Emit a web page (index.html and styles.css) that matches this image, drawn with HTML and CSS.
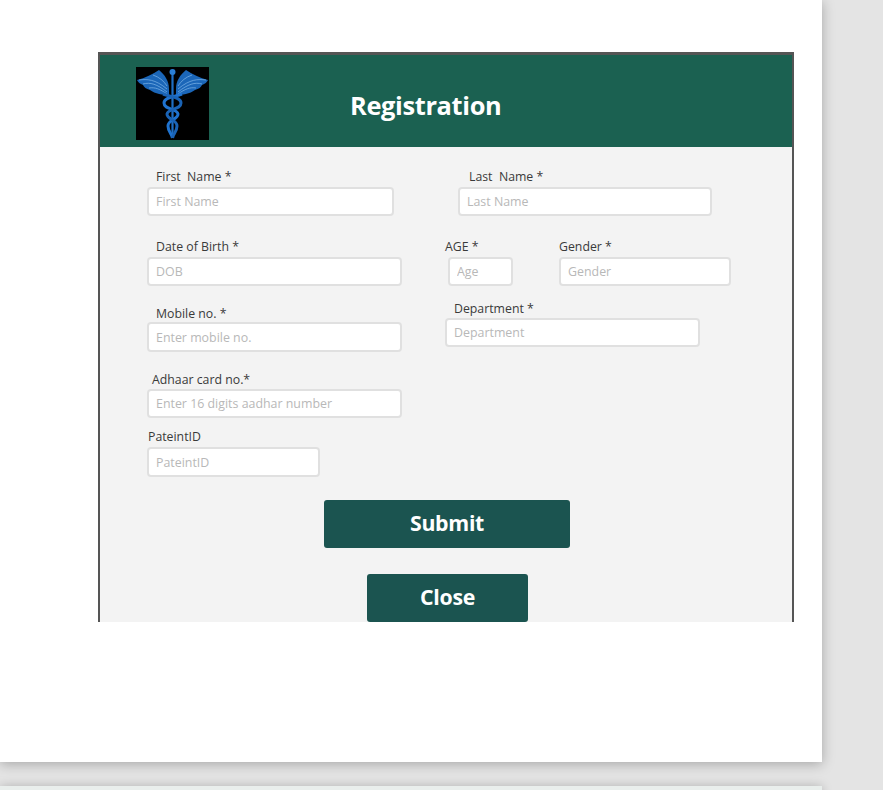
FILE: index.html
```html
<!DOCTYPE html>
<html lang="en">
<head>
<meta charset="utf-8">
<title>Registration</title>
<link rel="stylesheet" href="styles.css">
</head>
<body>
<main class="card">
  <section class="modal">
    <header class="modal-head">
      <svg class="logo" viewBox="0 0 73 73" aria-label="Caduceus logo">
        <rect width="73" height="73" fill="#000"/>
        <g>
          <path d="M33 28C27 28 19 27 14 23C10 22 8 20 7 18C4 17 2 15 1 13C9 11 17 7 23 3C29 8 33 14 33 22Z" fill="#1b66b8"/>
          <path d="M3 13C11 12 19 12 31 22M7 17C14 15 21 17 31 25M13 21C19 20 24 22 31 27M17 8C23 10 28 14 31 19" stroke="#7fb6e8" stroke-width=".7" fill="none"/>
        </g>
        <g>
          <path d="M40 28C46 28 54 27 59 23C63 22 65 20 66 18C69 17 71 15 72 13C64 11 56 7 50 3C44 8 40 14 40 22Z" fill="#1b66b8"/>
          <path d="M70 13C62 12 54 12 42 22M66 17C59 15 52 17 42 25M60 21C54 20 49 22 42 27M56 8C50 10 45 14 42 19" stroke="#7fb6e8" stroke-width=".7" fill="none"/>
        </g>
        <path d="M36.5 5V71" stroke="#1f6fc4" stroke-width="2.2" fill="none"/>
        <circle cx="36.5" cy="5" r="3" fill="#2a7fd6"/>
        <path d="M46 27C38 30 28 30 28 36C28 43 41 41 42 47C42 53 32 52 32 59C32 65 36 67 36.5 71" stroke="#1f73cf" stroke-width="3" fill="none"/>
        <path d="M27 27C35 30 45 30 45 36C45 43 32 41 31 47C31 53 41 52 41 59C41 65 37 67 36.5 71" stroke="#1a63b5" stroke-width="3" fill="none"/>
      </svg>
      <h1 class="title">Registration</h1>
    </header>
    <form class="form">
      <div class="row">
        <div class="field w-first"><label class="lbl in-9">First&nbsp; Name *</label><input class="inp" placeholder="First Name"></div>
        <div class="field w-last gap-64"><label class="lbl in-11">Last&nbsp; Name *</label><input class="inp" placeholder="Last Name"></div>
      </div>
      <div class="row row-2">
        <div class="field w-255"><label class="lbl in-9">Date of Birth *</label><input class="inp" placeholder="DOB"></div>
        <div class="field w-age gap-46"><label class="lbl out-3">AGE *</label><input class="inp" placeholder="Age"></div>
        <div class="field w-gender gap-46"><label class="lbl">Gender *</label><input class="inp" placeholder="Gender"></div>
      </div>
      <div class="row row-3">
        <div class="field w-255 drop-5"><label class="lbl in-9 lbl-tight">Mobile no. *</label><input class="inp inp-tall" placeholder="Enter mobile no."></div>
        <div class="field w-255 gap-43"><label class="lbl in-9 lbl-dept">Department *</label><input class="inp" placeholder="Department"></div>
      </div>
      <div class="row row-4">
        <div class="field w-255"><label class="lbl in-5 lbl-dept">Adhaar card no.*</label><input class="inp" placeholder="Enter 16 digits aadhar number"></div>
      </div>
      <div class="row row-5">
        <div class="field w-173"><label class="lbl in-1">PateintID</label><input class="inp inp-tall" placeholder="PateintID"></div>
      </div>
      <div class="actions">
        <button class="btn btn-submit" type="button">Submit</button>
        <button class="btn btn-close" type="button">Close</button>
      </div>
    </form>
  </section>
</main>
<div class="card-next"></div>
</body>
</html>
```

FILE: styles.css
```css
* { box-sizing: border-box; }
html, body { height: 100%; }
body {
  margin: 0;
  background: #e4e4e4;
  overflow: hidden;
  font-family: "Open Sans", "Noto Sans", "Liberation Sans", sans-serif;
}
.card {
  width: 822px;
  height: 762px;
  background: #fff;
  padding: 52px 0 0 98px;
  box-shadow: 0 2px 12px rgba(0, 0, 0, .28);
}
.card-next {
  width: 822px;
  height: 40px;
  margin-top: 24px;
  background: #e9eeec;
  box-shadow: 0 0 10px rgba(0, 0, 0, .22);
}
.modal {
  width: 696px;
  height: 570px;
  overflow: hidden;
  background: #f3f3f3;
  border: solid #555;
  border-width: 3px 2px 0;
}
.modal-head {
  height: 92px;
  background: #1b6151;
  display: flex;
  align-items: flex-start;
  padding: 12px 0 0 36px;
}
.logo { width: 73px; height: 73px; flex: none; }
.title {
  margin: 20px 0 0 141px;
  color: #fff;
  font-size: 25.4px;
  line-height: 36px;
  font-weight: 700;
  letter-spacing: -.35px;
}
.form { padding: 21px 0 0 47px; }
.row { display: flex; align-items: flex-start; }
.row-2 { margin-top: 22px; }
.row-3 { margin-top: 14px; }
.row-4 { margin-top: 19px; }
.row-5 { margin-top: 10px; }
.field { display: flex; flex-direction: column; }
.lbl {
  display: block;
  height: 16px;
  margin-bottom: 3px;
  color: #3a3a3a;
  font-size: 12.3px;
  line-height: 18px;
  white-space: nowrap;
}
.lbl-tight { margin-bottom: 1px; }
.lbl-dept { margin-bottom: 2px; }
.inp {
  width: 100%;
  height: 29px;
  padding: 0 0 0 7px;
  background: #fff;
  border: 2px solid #e0e0e0;
  border-radius: 4px;
  font-family: inherit;
  font-size: 12.4px;
  color: #333;
  outline: none;
}
.inp-tall { height: 30px; }
.inp::placeholder { color: #b8b8b8; opacity: 1; }
.w-first { width: 247px; }
.w-last { width: 254px; }
.w-255 { width: 255px; }
.w-age { width: 65px; }
.w-gender { width: 172px; }
.w-173 { width: 173px; }
.gap-64 { margin-left: 64px; }
.gap-46 { margin-left: 46px; }
.gap-43 { margin-left: 43px; }
.drop-5 { margin-top: 5px; }
.in-11 { margin-left: 11px; }
.in-9 { margin-left: 9px; }
.in-5 { margin-left: 5px; }
.in-1 { margin-left: 1px; }
.out-3 { margin-left: -3px; }
.actions {
  display: flex;
  flex-direction: column;
  align-items: flex-start;
  margin-top: 23px;
}
.btn {
  height: 48px;
  padding: 0 0 3px;
  background: #1b5450;
  border: 0;
  border-radius: 3px;
  color: #fff;
  font-family: inherit;
  font-size: 21.3px;
  font-weight: 700;
  letter-spacing: -.3px;
}
.btn-submit { width: 246px; margin-left: 177px; }
.btn-close { width: 161px; margin-left: 220px; margin-top: 26px; }
```
